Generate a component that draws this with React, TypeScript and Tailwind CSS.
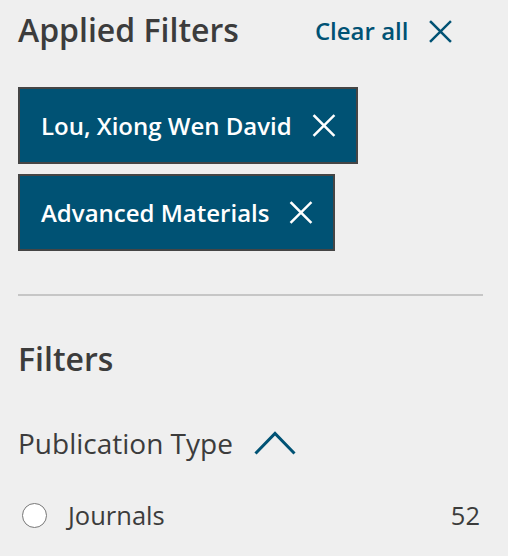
const XIcon = ({ className }: { className?: string }) => (
  <svg viewBox="0 0 24 24" className={className} fill="none" stroke="currentColor" strokeWidth={2.6} strokeLinecap="square">
    <path d="M2 2 L22 22 M22 2 L2 22" />
  </svg>
);

const chips = ["Lou, Xiong Wen David", "Advanced Materials"];

export default function App() {
  return (
    <div
      className="min-h-screen w-full bg-[#efefef] pl-[18px] pr-[25px] pt-[11px] text-[#3c3c3c]"
      style={{ fontFamily: '"Open Sans", "Liberation Sans", sans-serif' }}
    >
      <div className="flex items-center">
        <h2 className="text-[32px] font-semibold leading-[38px]">Applied Filters</h2>
        <button className="ml-[76px] mt-[2px] flex items-center text-[#005274]">
          <span className="text-[24px] font-semibold leading-[30px]">Clear all</span>
          <XIcon className="ml-[20px] h-[23px] w-[25px]" />
        </button>
      </div>

      <div className="mt-[38px] flex flex-col items-start gap-[10px]">
        {chips.map((c) => (
          <button
            key={c}
            className="flex h-[77px] items-center border-2 border-[#454545] bg-[#005274] pl-[21px] pr-[20px] text-white"
          >
            <span className="text-[24px] font-semibold leading-[30px]">{c}</span>
            <XIcon className="ml-[20px] h-[23px] w-[24px]" />
          </button>
        ))}
      </div>

      <div className="mt-[43px] h-[2px] bg-[#c6c6c6]" />

      <h3 className="mt-[44px] text-[32px] font-semibold leading-[38px]">Filters</h3>

      <div className="mt-[48px] flex items-center">
        <span className="text-[28px] leading-[34px]">Publication Type</span>
        <svg viewBox="0 0 42 24" className="ml-[21px] h-[24px] w-[42px] text-[#005274]" fill="none" stroke="currentColor" strokeWidth={3}>
          <path d="M1.5 22.5 L21 2.5 L40.5 22.5" />
        </svg>
      </div>

      <label className="mt-[40px] flex items-center pr-[3px]">
        <span className="ml-[4px] h-[25px] w-[25px] rounded-full border-[1.5px] border-[#777] bg-white" />
        <span className="ml-[21px] text-[25.5px] leading-[30px]">Journals</span>
        <span className="ml-auto text-[25.5px] leading-[30px]">52</span>
      </label>
    </div>
  );
}
